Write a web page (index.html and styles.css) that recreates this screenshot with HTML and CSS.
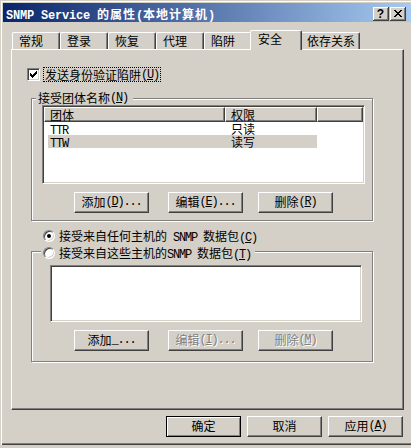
FILE: index.html
```html
<!DOCTYPE html>
<html lang="zh-CN">
<head>
<meta charset="utf-8">
<title>SNMP Service 的属性</title>
<link rel="stylesheet" href="styles.css">
</head>
<body>
<div class="window">
  <div class="titlebar">
    <span class="title-text"><span class="tm">SNMP Service </span><span class="tc">的属性</span><span class="tm">(</span><span class="tc">本地计算机</span><span class="tm">)</span></span>
    <span class="caps">
      <span class="capbtn help">?</span>
      <span class="capbtn close"><svg width="16" height="14" viewBox="0 0 16 14" shape-rendering="crispEdges"><path fill="#000" d="M4 3h2v1h-2z M10 3h2v1h-2z M5 4h2v1h-2z M9 4h2v1h-2z M6 5h4v1h-4z M7 6h2v1h-2z M6 7h4v1h-4z M5 8h2v1h-2z M9 8h2v1h-2z M4 9h2v1h-2z M10 9h2v1h-2z"/></svg></span>
    </span>
  </div>

  <div class="tabs">
    <span class="tab">常规</span>
    <span class="tab">登录</span>
    <span class="tab">恢复</span>
    <span class="tab">代理</span>
    <span class="tab">陷阱</span>
    <span class="tab sel">安全</span>
    <span class="tab wide">依存关系</span>
  </div>

  <div class="panel">
    <div class="chkrow">
      <span class="chk"><svg width="11" height="11" viewBox="0 0 11 11" shape-rendering="crispEdges"><path fill="#000" d="M2 4h1v3h-1z M3 5h1v3h-1z M4 6h1v3h-1z M5 5h1v3h-1z M6 4h1v3h-1z M7 3h1v3h-1z M8 2h1v3h-1z"/></svg></span>
      <span class="focus">发送身份验证陷阱<span class="a">(<u>U</u>)</span></span>
    </div>

    <div class="group g1">
      <div class="legend lg1">接受团体名称<span class="a">(<u>N</u>)</span></div>
      <div class="listview">
        <div class="lvhead">
          <span class="hc c1">团体</span>
          <span class="hc c2">权限</span>
          <span class="hc c3"></span>
        </div>
        <div class="lvrow">
          <span class="rc c1"><span class="a">TTR</span></span>
          <span class="rc c2">只读</span>
        </div>
        <div class="lvrow sel">
          <span class="rc c1"><span class="a">TTW</span></span>
          <span class="rc c2">读写</span>
        </div>
      </div>
      <div class="btnrow">
        <span class="btn">添加<span class="a">(<u>D</u>)...</span></span>
        <span class="btn b2">编辑<span class="a">(<u>E</u>)...</span></span>
        <span class="btn b3">删除<span class="a">(<u>R</u>)</span></span>
      </div>
    </div>

    <div class="radiorow">
      <span class="radio on"></span>
      <span class="rlabel">接受来自任何主机的<span class="a"> SNMP </span>数据包<span class="a">(<u>C</u>)</span></span>
    </div>

    <div class="group g2">
      <div class="legend lg2">
        <span class="radio"></span>
        <span class="rlabel">接受来自这些主机的<span class="a">SNMP </span>数据包<span class="a">(<u>T</u>)</span></span>
      </div>
      <div class="listbox"></div>
      <div class="btnrow">
        <span class="btn">添加<span class="a">_...</span></span>
        <span class="btn b2 dis">编辑<span class="a">(<u>I</u>)...</span></span>
        <span class="btn b3 dis">删除<span class="a">(<u>M</u>)</span></span>
      </div>
    </div>
  </div>

  <div class="dlgbtns">
    <span class="btn def">确定</span>
    <span class="btn">取消</span>
    <span class="btn">应用<span class="a">(<u>A</u>)</span></span>
  </div>
</div>
</body>
</html>
```
FILE: styles.css
```css
* { box-sizing: border-box; }
html, body { margin: 0; padding: 0; }
body {
  width: 411px;
  height: 448px;
  overflow: hidden;
  background: #D4D0C8;
  font-family: "Noto Sans CJK SC", "Noto Sans", sans-serif;
  font-size: 12px;
  line-height: 14px;
  color: #000;
}
.a {
  font-family: "Liberation Mono", "DejaVu Sans Mono", monospace;
  font-size: 12px;
  letter-spacing: -1.2px;
  line-height: 0;
  white-space: pre;
}
.window {
  width: 411px;
  height: 445px;
  padding: 3px 0 0 3px;
  background: #D4D0C8;
  box-shadow: inset 1px 1px 0 #D4D0C8, inset 2px 2px 0 #fff, inset 0 -1px 0 #404040, inset 0 -2px 0 #808080;
}

/* title bar */
.titlebar {
  height: 19px;
  display: flex;
  align-items: center;
  padding: 3px 5px 0 3px;
  background: linear-gradient(to right, #0A246A, #A6CAF0);
  color: #fff;
  font-weight: bold;
  line-height: 16px;
  white-space: nowrap;
}
.tm {
  font-family: "Liberation Mono", monospace;
  font-weight: bold;
  font-size: 12px;
  letter-spacing: -0.2px;
  line-height: 0;
  white-space: pre;
}
.tc { letter-spacing: 1px; }
.caps { margin-left: auto; display: flex; gap: 1px; }
.capbtn {
  width: 16px;
  height: 14px;
  display: flex;
  align-items: center;
  justify-content: center;
  background: #D4D0C8;
  box-shadow: inset -1px -1px 0 #404040, inset 1px 1px 0 #fff, inset -2px -2px 0 #808080;
  color: #000;
}
.capbtn svg { display: block; }
.help {
  font-family: "Liberation Sans", sans-serif;
  font-weight: bold;
  font-size: 12px;
  line-height: 14px;
  padding-right: 1px;
}

/* tabs */
.tabs {
  display: flex;
  align-items: flex-end;
  height: 19px;
  margin: 8px 0 0 8px;
  padding-left: 1px;
}
.tab {
  width: 48px;
  height: 17px;
  padding-left: 6px;
  line-height: 16px;
  border: 1px solid #fff;
  border-bottom: 0;
  border-right-color: #404040;
  border-radius: 2px 2px 0 0;
  box-shadow: inset -1px 0 0 #808080;
  background: #D4D0C8;
  white-space: nowrap;
}
.tab.sel {
  position: relative;
  z-index: 1;
  width: 52px;
  height: 20px;
  margin: 0 -2px -1px;
  padding-left: 7px;
  line-height: 15px;
}
.tab.wide { width: 60px; }

/* panel */
.panel {
  margin-left: 8px;
  width: 393px;
  height: 361px;
  border: 1px solid #fff;
  border-right-color: #404040;
  border-bottom-color: #404040;
  box-shadow: inset -1px -1px 0 #808080;
}
.chkrow {
  display: flex;
  align-items: center;
  height: 15px;
  margin: 17px 0 0 15px;
}
.chk {
  flex: none;
  width: 13px;
  height: 13px;
  background: #fff;
  border: 1px solid;
  border-color: #808080 #fff #fff #808080;
  box-shadow: inset 1px 1px 0 #404040, inset -1px -1px 0 #D4D0C8;
}
.chk svg { display: block; }
.focus {
  display: flex;
  align-items: center;
  height: 15px;
  margin-left: 3px;
  padding: 0 1px;
  border: 1px dotted #000;
  line-height: 12px;
  white-space: nowrap;
}

/* group boxes */
.group {
  margin-left: 19px;
  width: 342px;
  border: 1px solid #808080;
  box-shadow: inset 1px 1px 0 #fff, 1px 1px 0 #fff;
}
.g1 { margin-top: 16px; height: 123px; }
.g2 { margin-top: 8px; height: 111px; }
.legend {
  display: flex;
  align-items: center;
  width: max-content;
  height: 14px;
  background: #D4D0C8;
  white-space: nowrap;
}
.lg1 { margin: -8px 0 0 4px; padding: 0 5px 0 2px; }
.lg2 { margin: -6px 0 0 9px; padding: 0 4px 0 2px; }

.listview, .listbox {
  background: #fff;
  border: 1px solid;
  border-color: #808080 #fff #fff #808080;
  box-shadow: inset 1px 1px 0 #404040, inset -1px -1px 0 #D4D0C8;
}
.listview {
  margin-left: 10px;
  width: 323px;
  height: 79px;
  padding: 1px;
}
.lvhead { display: flex; height: 15px; }
.hc {
  height: 15px;
  padding-left: 5px;
  line-height: 13px;
  background: #D4D0C8;
  border: 1px solid #fff;
  border-right-color: #404040;
  border-bottom-color: #404040;
  box-shadow: inset -1px -1px 0 #808080;
}
.hc.c1 { width: 181px; }
.hc.c2 { width: 92px; }
.hc.c3 { flex: 1; }
.lvrow {
  display: flex;
  width: 269px;
  height: 13px;
  margin-left: 4px;
  line-height: 13px;
}
.lvrow.sel { background: #D4D0C8; }
.rc.c1 { width: 177px; padding-left: 2px; }
.rc.c2 { width: 92px; padding-left: 6px; }

.listbox {
  margin: 5px 0 0 18px;
  width: 312px;
  height: 57px;
}

/* buttons */
.btnrow { display: flex; margin: 8px 0 0 42px; }
.btn {
  width: 75px;
  height: 21px;
  display: flex;
  align-items: center;
  justify-content: center;
  padding-bottom: 2px;
  background: #D4D0C8;
  border: 1px solid;
  border-color: #fff #404040 #404040 #fff;
  box-shadow: inset -1px -1px 0 #808080;
  white-space: nowrap;
}
.btnrow .b2 { margin-left: 19px; }
.btnrow .b3 { margin-left: 15px; }
.btn.dis { color: #808080; text-shadow: 1px 1px 0 #fff; }
.btn.def {
  border-color: #000;
  box-shadow: inset 1px 1px 0 #fff, inset -1px -1px 0 #808080;
}

/* radios */
.radiorow {
  display: flex;
  align-items: center;
  height: 14px;
  margin: 8px 0 0 31px;
}
.radio {
  flex: none;
  width: 12px;
  height: 12px;
  border-radius: 50%;
  border: 1px solid;
  border-color: #808080 #fff #fff #808080;
  box-shadow: inset 1px 1px 0 #404040, inset -1px -1px 0 #D4D0C8;
  background: #fff;
  display: flex;
  align-items: center;
  justify-content: center;
}
.radio.on::after {
  content: "";
  width: 4px;
  height: 4px;
  border-radius: 50%;
  background: #000;
}
.rlabel { margin-left: 4px; white-space: nowrap; }

.dlgbtns {
  display: flex;
  justify-content: flex-end;
  gap: 6px;
  width: 392px;
  margin: 6px 0 0 8px;
}
```
